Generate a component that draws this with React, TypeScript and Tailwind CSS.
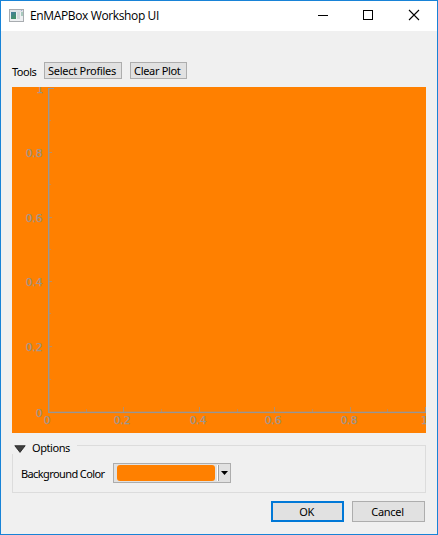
import React from "react";

const AXIS = "#969696";
const yTicks = [
  { y: 66, label: "0.8" },
  { y: 131, label: "0.6" },
  { y: 195, label: "0.4" },
  { y: 260, label: "0.2" },
];
const xTicks = [
  { x: 111, label: "0.2" },
  { x: 187, label: "0.4" },
  { x: 262, label: "0.6" },
  { x: 338, label: "0.8" },
];
const yMinor = [34, 98, 163, 227, 293];
const xMinor = [74, 149, 225, 300, 375];

function Plot() {
  return (
    <svg
      width="414"
      height="346"
      viewBox="0 0 414 346"
      className="block shrink-0 bg-[#ff8000] font-['DejaVu_Sans',sans-serif] text-[10.5px]"
      fill={AXIS}
    >
      <rect x="36" y="1" width="1.4" height="325" />
      <rect x="36" y="324.7" width="378" height="1.4" />
      <rect x="36" y="1" width="6" height="1" />
      <rect x="413" y="320" width="1" height="5" />
      {yMinor.map((y) => (
        <rect key={y} x="37" y={y - 1} width="2" height="1" opacity="0.5" />
      ))}
      {xMinor.map((x) => (
        <rect key={x} x={x} y="322" width="1" height="3" opacity="0.5" />
      ))}
      {yTicks.map((t) => (
        <rect key={t.label} x="37" y={t.y - 1} width="3" height="1" opacity="0.7" />
      ))}
      {xTicks.map((t) => (
        <rect key={t.label} x={t.x} y="320" width="1" height="5" opacity="0.75" />
      ))}
      <g fill="#9b9691" stroke="#9b9691" strokeWidth="0.25">
        {yTicks.map((t) => (
          <text key={t.label} x="13.7" y={t.y + 4}>{t.label}</text>
        ))}
        {xTicks.map((t) => (
          <text key={t.label} x={t.x - 9.3} y="337">{t.label}</text>
        ))}
        <text x="24.5" y="6">1</text>
        <text x="23.7" y="330">0</text>
        <text x="31.7" y="337">0</text>
        <text x="409" y="337">1</text>
      </g>
    </svg>
  );
}

function AppIcon() {
  return (
    <svg width="16" height="14" viewBox="0 0 16 14" className="ml-2 block">
      <defs>
        <linearGradient id="screen" x1="0" y1="0" x2="0.5" y2="1">
          <stop offset="0" stopColor="#467da0" />
          <stop offset="1" stopColor="#429168" />
        </linearGradient>
      </defs>
      <rect x="0.5" y="0.5" width="14" height="12" fill="#eef0f2" stroke="#a8acb0" />
      <rect x="1" y="1" width="13" height="2" fill="#dfe3e6" />
      <rect x="2" y="3" width="5" height="7" fill="url(#screen)" />
      <rect x="8" y="3" width="3" height="7" fill="#d5dadd" />
      <rect x="12" y="3" width="2" height="4" fill="#a8c9bd" />
      <rect x="12" y="1" width="1" height="1" fill="#a2aed0" />
    </svg>
  );
}

export default function App() {
  return (
    <div className="flex h-[535px] w-[438px] flex-col overflow-hidden border border-[#1883d7] bg-[#f0f0f0] font-['Noto_Sans',sans-serif] text-[11px] leading-[15px] text-black">
      <header className="flex h-[30px] shrink-0 items-center bg-white">
        <AppIcon />
        <h1 className="ml-[5px] flex-1 whitespace-nowrap font-['Open_Sans',sans-serif] text-[12px] font-normal leading-4">
          <span className="inline-block tracking-[-0.37px]">EnMAPBox Workshop UI</span>
        </h1>
        <svg width="137" height="30" viewBox="0 0 137 30" fill="none" stroke="black" shapeRendering="crispEdges">
          <path d="M18 14.5h10M63.5 9.5h9v9h-9z" />
          <path d="M109 9l10 10M119 9l-10 10" shapeRendering="auto" strokeWidth="1.1" />
        </svg>
      </header>

      <main className="flex flex-col px-[11px] pt-[31px]">
        <div className="mb-2 flex h-[17px] items-center whitespace-nowrap">
          <span className="w-8 pt-[2px] tracking-[-0.5px]">Tools</span>
          <button className="mr-2 flex h-[17px] w-[78px] items-center border border-[#adadad] bg-[#e1e1e1] pl-[3px] tracking-[-0.26px]">
            Select Profiles
          </button>
          <button className="flex h-[17px] w-[57px] items-center border border-[#adadad] bg-[#e1e1e1] pl-[3px] tracking-[-0.32px]">
            Clear Plot
          </button>
        </div>

        <Plot />

        <section className="mt-3 h-12 w-[414px] border border-[#dcdcdc]">
          <div className="-ml-px -mt-px flex h-[9px] w-[65px] items-center bg-[#f0f0f0]">
            <svg width="12" height="8" viewBox="0 0 12 8" className="ml-[2px] mt-[-2px]">
              <path d="M0.8 0.7h10.4L6 7.4z" fill="#404040" stroke="#202020" strokeWidth="0.8" />
            </svg>
            <span className="ml-[6px] mt-[-4px] tracking-[-0.42px]">Options</span>
          </div>
          <div className="ml-2 mt-[9px] flex h-5 items-center">
            <span className="w-[92px] whitespace-nowrap pt-px tracking-[-0.6px]">Background Color</span>
            <div className="flex h-5 w-[118px] items-center border border-[#adadad] bg-[#e1e1e1]">
              <div className="ml-[3px] h-4 w-[98px] rounded-[3px] bg-[#ff8000]" />
              <div className="ml-[2px] h-4 w-[2px] border-r border-[#a0a0a0] bg-white" />
              <svg width="7" height="4" viewBox="0 0 7 4" className="ml-[2px]">
                <path d="M0 0h7L3.5 4z" />
              </svg>
            </div>
          </div>
        </section>

        <div className="mt-2 flex justify-end gap-2 pr-px">
          <button className="flex h-[21px] w-[73px] items-center justify-center border-2 border-[#0078d7] bg-[#e1e1e1] pr-[2px] tracking-[-0.5px]">
            OK
          </button>
          <button className="flex h-[21px] w-[73px] items-center justify-center border border-[#adadad] bg-[#e1e1e1] pr-[2px] tracking-[-0.3px]">
            Cancel
          </button>
        </div>
      </main>
    </div>
  );
}
